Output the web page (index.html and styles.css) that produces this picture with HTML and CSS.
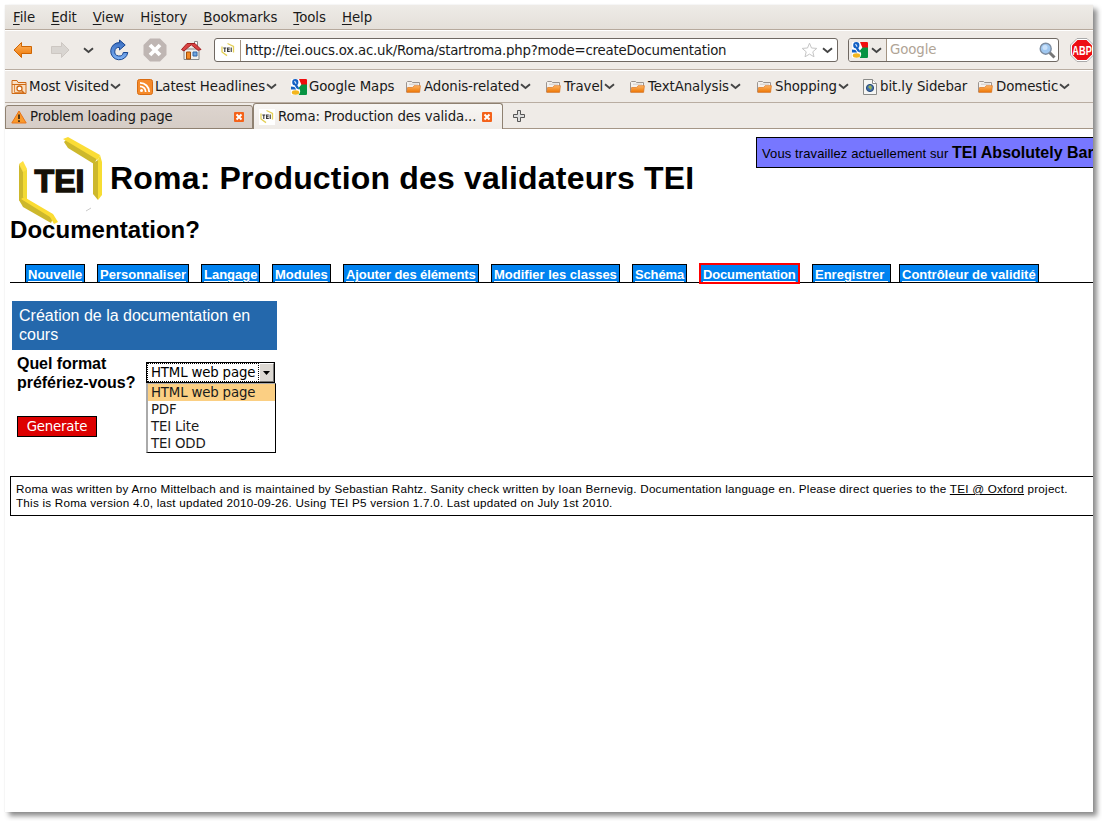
FILE: index.html
```html
<!DOCTYPE html>
<html lang="fr">
<head>
<meta charset="utf-8">
<title>Roma: Production des validateurs TEI</title>
<link rel="stylesheet" href="styles.css">
</head>
<body>
<svg class="defs" width="0" height="0">
  <defs>
    <linearGradient id="orange" x1="0" y1="0" x2="0" y2="1"><stop offset="0" stop-color="#fdb565"/><stop offset="1" stop-color="#ee7500"/></linearGradient>
    <linearGradient id="blue" x1="0" y1="0" x2="0" y2="1"><stop offset="0" stop-color="#3468bd"/><stop offset="1" stop-color="#7fb2f5"/></linearGradient>
    <symbol id="chev" viewBox="0 0 11 7"><path d="M1 1.200 5.500 5 10 1.200" fill="none" stroke="#444" stroke-width="1.900"/></symbol>
    <symbol id="folder" viewBox="0 0 15 12"><path d="M.5 11V1.500l1-1h4l1 1h7V11z" fill="#f4f1ee" stroke="#9b9490"/><path d="M3 3.200h9" stroke="#d3cdc9"/><path d="M.8 11.300 1.600 6.500h5l1.500-1.800h6.300l-.8 6.600z" fill="url(#orange)" stroke="#e2802e" stroke-width=".8"/></symbol>
    <symbol id="google" viewBox="0 0 16 16"><rect width="16" height="16" rx="1" fill="#fff"/><path d="M8 0H15a1 1 0 0 1 1 1v5h-5.500z" fill="#f00d0d"/><path d="M10.500 5.500H16V15a1 1 0 0 1-1 1H7.500c2.500-3 2-5 0-7z" fill="#079342"/><ellipse cx="4.300" cy="3.300" rx="2.300" ry="2.400" fill="#1260c4" stroke="#1260c4" stroke-width="1.600"/><path d="M5.500 5.500c-1.500 2 2 2.500 1.300 4.500" fill="none" stroke="#1260c4" stroke-width="2.400"/><path d="M0 7.500 3.500 8l1.700 2.500L0 10.500z" fill="#1260c4"/><path d="m3.500 2 1.600 2.600" stroke="#d3e2f6" stroke-width="1.200"/><ellipse cx="4.500" cy="13.500" rx="3.700" ry="2.200" fill="#f3b51d"/></symbol>
    <symbol id="close" viewBox="0 0 10 10"><rect width="10" height="10" rx="1" fill="#f4621a"/><path d="m2.500 2.500 5 5m0-5-5 5" stroke="#fff" stroke-width="2"/></symbol>
    <symbol id="tei" viewBox="0 0 16 16"><rect width="16" height="16" fill="#fff"/><path d="M7.500 1.500 13.500 4.500v6M2 4.500v5.500l5 3.600" fill="none" stroke="#e3cf55" stroke-width="1.300"/><path d="M3.300 6h3M4.800 6v4M9.800 6H7.600v3.500h2.200M7.600 7.800h2M11.200 5.500V10" fill="none" stroke="#333" stroke-width="1.100"/></symbol>
  </defs>
</svg>
<div class="window">
  <nav class="menubar">
    <span><u>F</u>ile</span><span><u>E</u>dit</span><span><u>V</u>iew</span><span>Hi<u>s</u>tory</span><span><u>B</u>ookmarks</span><span><u>T</u>ools</span><span><u>H</u>elp</span>
  </nav>

  <div class="toolbar">
    <svg class="back" viewBox="0 0 20 18" width="20" height="18"><path d="M1 9 8.500 1.500V5.500H18.500v7H8.500V16.500z" fill="url(#orange)" stroke="#cf6503" stroke-linejoin="round"/></svg>
    <svg class="forward" viewBox="0 0 20 18" width="20" height="18"><path d="M19 9 11.500 1.500V5.500H1.500v7h10V16.500z" fill="#d9d5d1" stroke="#cdc7c2" stroke-linejoin="round"/></svg>
    <svg class="history" width="11" height="7"><use href="#chev"/></svg>
    <svg class="reload" viewBox="0 0 20 22" width="20" height="22"><path d="M10.500 1v2.600A8.600 8.600 0 1 0 18.800 13.500H14.300A4.300 4.300 0 1 1 10.500 8.400V11l5.700-5z" fill="url(#blue)" stroke="#18458f" stroke-linejoin="round"/></svg>
    <svg class="stop" viewBox="0 0 24 24" width="24" height="24"><path d="M7 .5h10L23.500 7v10L17 23.500H7L.5 17V7z" fill="#bfb6b3"/><path d="m7 7 10 10m0-10L7 17" stroke="#fff" stroke-width="3.800"/></svg>
    <svg class="home" viewBox="0 0 22 21" width="22" height="21"><path d="M4 9h15v10.500H4z" fill="#f1efec" stroke="#888"/><path d="M14.500 1.500h3V7h-3z" fill="#fff" stroke="#888"/><path d="M1.500 9.500 7 3.500h8l6 6-3 .8-6.800-5.500L4 11z" fill="#d94343" stroke="#a12020" stroke-linejoin="round"/><path d="M6.500 12h4v7h-4z" fill="#f38a25" stroke="#a44e08"/><path d="M13 12h4v4h-4z" fill="#6ea5de" stroke="#3465a4"/></svg>
    <div class="urlbar">
      <svg width="16" height="16"><use href="#tei"/></svg>
      <span class="url">http://tei.oucs.ox.ac.uk/Roma/startroma.php?mode=createDocumentation</span>
      <svg class="star" viewBox="0 0 17 16" width="17" height="16"><path d="m8.500 1.200 2 4.800 5.300.4-4 3.400 1.200 5-4.500-2.700L4 14.800l1.200-5-4-3.400L6.500 6z" fill="#fff" stroke="#c6c6c6"/></svg>
      <svg width="11" height="7"><use href="#chev"/></svg>
    </div>
    <div class="search">
      <div class="engine"><svg width="16" height="16"><use href="#google"/></svg><svg width="11" height="7"><use href="#chev"/></svg></div>
      <span class="hint">Google</span>
      <svg viewBox="0 0 17 17" width="17" height="17"><path d="m10.500 10.500 5 5" stroke="#777" stroke-width="3"/><circle cx="6.700" cy="6.700" r="5.500" fill="#9fc7f0" stroke="#7d8ca0" stroke-width="1.400"/><circle cx="6" cy="5.500" r="2.500" fill="#c9e1fa"/></svg>
    </div>
    <svg class="abp" viewBox="0 0 24 24" width="24" height="24"><path d="M7 .5h10L23.500 7v10L17 23.500H7L.5 17V7z" fill="#fff" stroke="#aaa"/><path d="M7.500 2h9L22 7.500v9L16.500 22h-9L2 16.500v-9z" fill="#ed0d13"/><text x="2.300" y="16.500" font-size="12.500" textLength="19.500" lengthAdjust="spacingAndGlyphs">ABP</text></svg>
  </div>

  <div class="bookmarks">
    <div class="bm most"><svg viewBox="0 0 16 16" width="16" height="16"><path d="M1 14.500V1.500h5l1 2h8v11z" fill="#f9dfc4" stroke="#ce6a16"/><path d="M3.500 6v7.500h9" fill="none" stroke="#e28b3e"/><path d="M1 5.500h14" stroke="#ce6a16"/><circle cx="8.500" cy="9.500" r="2.500" fill="#fff" stroke="#ce6a16" stroke-width="1.300"/><path d="m10.500 11.500 3 3" stroke="#ce6a16" stroke-width="1.500"/></svg><span>Most Visited</span><svg width="11" height="7"><use href="#chev"/></svg></div>
    <div class="bm latest"><svg viewBox="0 0 16 16" width="16" height="16"><rect x=".5" y=".5" width="15" height="15" rx="2" fill="#f58a2b" stroke="#d96c12"/><circle cx="4.500" cy="11.500" r="1.500" fill="#fff"/><path d="M3 7.300A5.700 5.700 0 0 1 8.700 13M3 3.800A9.200 9.200 0 0 1 12.200 13" fill="none" stroke="#fff" stroke-width="1.800"/></svg><span>Latest Headlines</span><svg width="11" height="7"><use href="#chev"/></svg></div>
    <div class="bm maps"><svg width="16" height="16"><use href="#google"/></svg><span>Google Maps</span></div>
    <div class="bm adonis"><svg width="15" height="12"><use href="#folder"/></svg><span>Adonis-related</span><svg width="11" height="7"><use href="#chev"/></svg></div>
    <div class="bm travel"><svg width="15" height="12"><use href="#folder"/></svg><span>Travel</span><svg width="11" height="7"><use href="#chev"/></svg></div>
    <div class="bm analysis"><svg width="15" height="12"><use href="#folder"/></svg><span>TextAnalysis</span><svg width="11" height="7"><use href="#chev"/></svg></div>
    <div class="bm shopping"><svg width="15" height="12"><use href="#folder"/></svg><span>Shopping</span><svg width="11" height="7"><use href="#chev"/></svg></div>
    <div class="bm bitly"><svg viewBox="0 0 14 16" width="14" height="16"><path d="M.5.500h9l4 4v11H.5z" fill="#f6f6f4" stroke="#8b8b88"/><path d="M9.500.500v4h4" fill="#fff" stroke="#8b8b88"/><circle cx="7" cy="9" r="3.600" fill="#416fae" stroke="#294a77"/><path d="m5 8 2-2 2 2-1 3z" fill="#9bb356"/></svg><span>bit.ly Sidebar</span></div>
    <div class="bm domestic"><svg width="15" height="12"><use href="#folder"/></svg><span>Domestic</span><svg width="11" height="7"><use href="#chev"/></svg></div>
  </div>

  <div class="tabs">
    <div class="tab idle"><svg viewBox="0 0 16 14" width="16" height="14"><path d="M8 1 15.200 13H.8z" fill="#f99a2c" stroke="#e8741a" stroke-linejoin="round"/><path d="M8 4.500V9M8 10.200V12" stroke="#3c2a14" stroke-width="1.700"/></svg><span>Problem loading page</span><svg width="10" height="10"><use href="#close"/></svg></div>
    <div class="tab current"><svg width="16" height="16"><use href="#tei"/></svg><span>Roma: Production des valida...</span><svg width="10" height="10"><use href="#close"/></svg></div>
    <div class="newtab"><svg viewBox="0 0 12 12" width="12" height="12"><path d="M4.500.500h3v4h4v3h-4v4h-3v-4h-4v-3h4z" fill="#ddd" stroke="#555"/></svg></div>
  </div>

  <main class="page">
    <header class="head">
      <svg class="logo" viewBox="0 0 88 88" width="88" height="88">
        <path d="M45 5 49 11 75 27 79 20 48 2z" fill="#cdb82c"/><path d="M44 2 49 0 81 18 79 23z" fill="#fbdd36"/><path d="M74 26 79 23V63L74 57z" fill="#cdb82c"/><path d="M79 23 81 18 83 25V58L79 63z" fill="#f7dd33"/>
        <path d="M0 27 4 24 8 32 4 36z" fill="#ffe142"/><path d="M4 35 8 32V62L4 64z" fill="#f2da35"/><path d="M0 27 4 35V68L0 63z" fill="#cdb82c"/><path d="M0 63 4 60 35 79 32 86 4 70z" fill="#cdb82c"/><path d="M2 62 5 60 34 77 39 85 35 87 31 80z" fill="#fbdc32"/>
        <path d="m67 74 5-3" stroke="#bbb" stroke-width=".8"/>
        <text x="15.500" y="55" textLength="50" lengthAdjust="spacingAndGlyphs">TEI</text>
      </svg>
      <h1>Roma: Production des validateurs TEI</h1>
      <div class="status">Vous travaillez actuellement sur <b>TEI Absolutely Bar</b></div>
    </header>
    <h2>Documentation?</h2>
    <nav class="sections">
      <a class="s1">Nouvelle</a><a class="s2">Personnaliser</a><a class="s3">Langage</a><a class="s4">Modules</a><a class="s5">Ajouter des éléments</a><a class="s6">Modifier les classes</a><a class="s7">Schéma</a><a class="s8 active">Documentation</a><a class="s9">Enregistrer&nbsp;</a><a class="s10">Contrôleur de validité</a>
    </nav>
    <section class="form">
      <h3>Création de la documentation en cours</h3>
      <div class="row">
        <label>Quel format<br>préfériez-vous?</label>
        <div class="select">
          <div class="value"><span>HTML web page</span><i><svg viewBox="0 0 7 4" width="7" height="4"><path d="M0 0h7L3.500 4z"/></svg></i></div>
          <ul><li class="on">HTML web page</li><li>PDF</li><li>TEI Lite</li><li>TEI ODD</li></ul>
        </div>
      </div>
      <button>Generate</button>
    </section>
    <footer>
      <div class="f1">Roma was written by Arno Mittelbach and is maintained by Sebastian Rahtz. Sanity check written by Ioan Bernevig. Documentation language en. Please direct queries to the <u>TEI @ Oxford</u> project.</div>
      <div class="f2">This is Roma version 4.0, last updated 2010-09-26. Using TEI P5 version 1.7.0. Last updated on July 1st 2010.</div>
    </footer>
  </main>
</div>
</body>
</html>
```
FILE: styles.css
```css
* { box-sizing: border-box; }
body { margin: 0; padding: 5px 9px 9px 5px; height: 821px; overflow: hidden; background: #fff; }
svg { display: block; flex: none; }
.defs { position: absolute; }
.window {
  width: 1088px; height: 807px;
  box-shadow: 4px 4px 5px rgba(0,0,0,.45), 0 0 1px rgba(0,0,0,.12);
  font: 13.33px/16px "DejaVu Sans", sans-serif; color: #1a1a1a; background: #fff;
  white-space: nowrap;
}
.menubar {
  display: flex; gap: 16px; height: 25px; padding: 5px 8px 0;
  background: linear-gradient(#eeebe7, #e4dfd9); border-bottom: 1px solid #b6a99c;
}
.menubar span { letter-spacing: -.05px; }
.menubar u { text-underline-offset: 2px; }
.toolbar {
  display: flex; align-items: center; height: 40px; padding: 0 0 0 8px; overflow: hidden;
  background: #efebe7; border-top: 1px solid #fff; border-bottom: 1px solid #b9ada2;
}
.forward { margin-left: 17px; }
.history { margin-left: 13px; }
.reload { margin-left: 15px; }
.stop { margin-left: 14px; }
.home { margin-left: 13px; }
.urlbar {
  display: flex; flex: none; align-items: center; width: 624px; height: 24px; margin-left: 12px; padding: 0 4px 0 5px;
  background: #fff; border: 1px solid #6f6862; border-radius: 3px;
}
.url { flex: 1; margin-left: 4px; padding-left: 4px; border-left: 1px solid #a39382; line-height: 21px; letter-spacing: -.22px; }
.star { margin-right: 4px; }
.search {
  display: flex; flex: none; align-items: center; width: 211px; height: 24px; margin-left: 10px; padding-right: 2px;
  background: #fff; border: 1px solid #6f6862; border-radius: 3px; overflow: hidden;
}
.engine { display: flex; align-items: center; gap: 3px; width: 38px; height: 22px; padding-left: 3px; background: #efebe7; border-right: 1px solid #a39382; }
.hint { flex: 1; padding-left: 3px; color: #b0a496; line-height: 18px; letter-spacing: -.1px; }
.abp { margin-left: 11px; }
.abp text { font-family: "Liberation Sans", sans-serif; font-weight: bold; fill: #fff; }
.bookmarks {
  display: flex; align-items: center; height: 33px; padding-left: 6px; letter-spacing: -.08px;
  background: #efebe7; border-top: 1px solid #fff; border-bottom: 1px solid #b9ada2;
}
.bm { display: flex; align-items: center; gap: 2px; }
.most { width: 126px; }
.latest { width: 154px; }
.maps { width: 115px; }
.adonis { width: 140px; }
.travel { width: 84px; }
.analysis { width: 127px; }
.shopping { width: 106px; }
.bitly { width: 115px; gap: 3px; }
.bm span + svg { margin-left: -1px; }
.adonis, .travel, .analysis, .shopping, .domestic { gap: 3px; }
.adonis span + svg, .travel span + svg, .analysis span + svg, .shopping span + svg, .domestic span + svg { margin-left: -2px; }
.tabs { display: flex; height: 26px; background: #efebe7; box-shadow: inset 0 -1px #a59687; }
.tab { display: flex; align-items: center; border: 1px solid #8f8171; border-radius: 3px 3px 0 0; letter-spacing: -.14px; }
.tab span { flex: 1; }
.idle { width: 248px; height: 24px; margin-top: 2px; padding: 0 8px 0 5px; background: linear-gradient(#ddd4ce, #d6cdc6); }
.idle span { margin-left: 3px; }
.current { width: 250px; height: 26px; padding: 0 10px 0 5px; background: linear-gradient(#f8f6f4, #efebe7); border-bottom: 0; }
.current span { margin-left: 3px; }
.newtab { padding: 7px 0 0 10px; }

.page { height: 683px; padding-left: 5px; overflow: hidden; font-family: "Liberation Sans", sans-serif; color: #000; }
.head { display: flex; height: 86px; padding: 8px 0 0 9px; }
.logo text { font: bold 32px "Liberation Sans", sans-serif; fill: #151007; stroke: #151007; stroke-width: 1.400; }
h1 { flex: none; width: 584px; margin: 22px 0 0 3px; font-size: 32px; line-height: 38px; letter-spacing: .18px; }
.status { flex: none; width: 360px; margin-left: 62px; height: 31px; padding: 0 5px; border: 1px solid #000; background: #7777ff; font-size: 13px; line-height: 29px; letter-spacing: .11px; }
.status b { font-size: 16px; letter-spacing: 0; }
h2 { margin: 0; font-size: 24px; line-height: 30px; letter-spacing: .05px; }
.sections { display: flex; height: 38px; padding: 19px 0 0 15px; border-bottom: 1px solid #000; align-items: flex-start; }
.sections a {
  height: 19px; flex: none; border: 1px solid #000; background: #0082f0; color: #fff; padding: 2px 0 0 2px;
  font-size: 13px; font-weight: bold; line-height: 16px; text-decoration: underline; text-underline-offset: 2px; text-decoration-thickness: 1px;
}
.s1 { width: 60px; margin-right: 12px; }
.s2 { width: 92px; margin-right: 12px; }
.s3 { width: 59px; margin-right: 12px; }
.s4 { width: 59px; margin-right: 12px; }
.sections .s5 { width: 136px; margin-right: 12px; letter-spacing: -.09px; }
.s6 { width: 129px; margin-right: 12px; }
.sections .s7 { width: 55px; margin-right: 12px; letter-spacing: -.15px; }
.sections .active { width: 101px; height: 21px; margin: -1px 12px 0 0; border: 2px solid #f00; letter-spacing: -.15px; }
.s9 { width: 79px; margin-right: 8px; }
.s10 { width: 140px; }
.form { height: 193px; padding: 18px 0 0 2px; font-size: 16px; }
h3 { width: 265px; height: 49px; margin: 0; padding: 5px 7px; background: #2468ac; color: #fff; font-size: 16px; font-weight: normal; line-height: 19px; white-space: normal; }
.row { display: flex; height: 66px; padding: 4px 0 0 5px; }
label { width: 129px; font-weight: bold; line-height: 19px; letter-spacing: -.05px; }
.select { position: relative; width: 130px; margin-top: 8px; font: 13.33px/17px "DejaVu Sans", sans-serif; letter-spacing: -.17px; }
.value { display: flex; width: 129px; height: 21px; border: 1px solid #000; }
.value span { width: 112px; border: 1px dotted #000; padding-left: 3px; line-height: 18px; }
.value i { display: flex; align-items: center; justify-content: center; width: 15px; background: #dcd8d2; border: 1px solid; border-color: #fff #777 #777 #fff; }
.select ul { position: absolute; top: 21px; left: 0; width: 130px; height: 70px; margin: 0; padding: 0; list-style: none; background: #fff; border: 1px solid #000; border-left: 2px solid #aaa; border-top-color: #aaa; color: #1a1a1a; }
.select li { padding-left: 3px; }
.select .on { background: #fbcf83; }
button { display: block; width: 80px; height: 21px; margin: 0 0 0 5px; padding: 0; border: 1px solid #000; background: #d00; color: #fff; font: 13.33px/18px "DejaVu Sans", sans-serif; letter-spacing: -.2px; }
footer { width: 1100px; height: 40px; padding: 5px; border: 1px solid #000; font-size: 11.700px; line-height: 14px; letter-spacing: .218px; }
```
